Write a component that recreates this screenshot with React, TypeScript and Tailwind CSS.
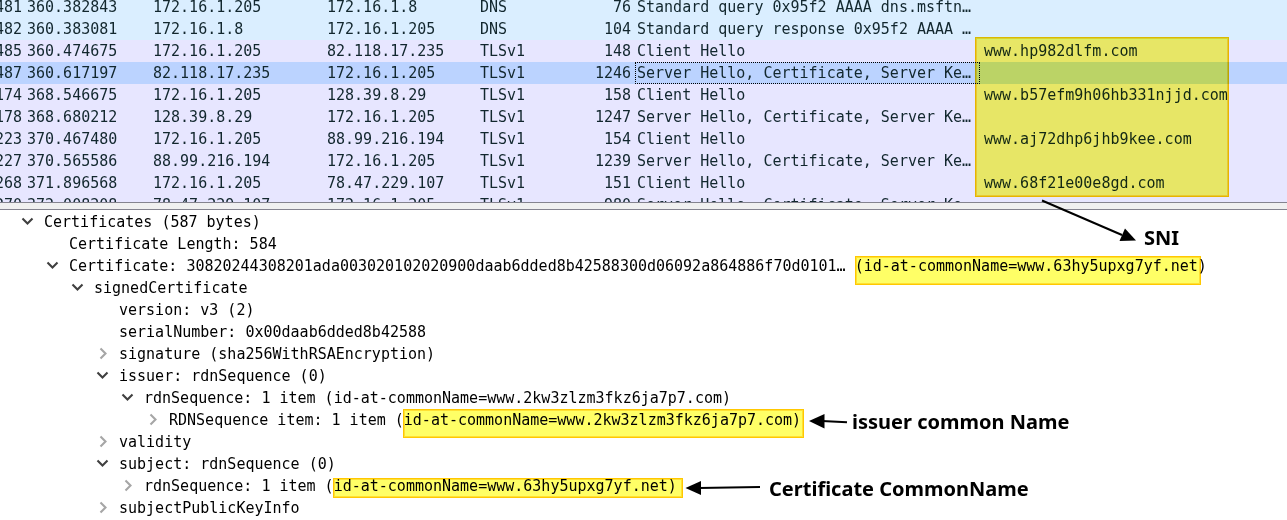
import { useState } from "react";

type Packet = {
  no: string;
  time: string;
  src: string;
  dst: string;
  proto: string;
  len: string;
  info: string;
  sni?: string;
};

const hello = "Server Hello, Certificate, Server Ke…";

const packets: Packet[] = [
  { no: "481", time: "360.382843", src: "172.16.1.205", dst: "172.16.1.8", proto: "DNS", len: "76", info: "Standard query 0x95f2 AAAA dns.msftn…" },
  { no: "482", time: "360.383081", src: "172.16.1.8", dst: "172.16.1.205", proto: "DNS", len: "104", info: "Standard query response 0x95f2 AAAA …" },
  { no: "485", time: "360.474675", src: "172.16.1.205", dst: "82.118.17.235", proto: "TLSv1", len: "148", info: "Client Hello", sni: "www.hp982dlfm.com" },
  { no: "487", time: "360.617197", src: "82.118.17.235", dst: "172.16.1.205", proto: "TLSv1", len: "1246", info: hello },
  { no: "174", time: "368.546675", src: "172.16.1.205", dst: "128.39.8.29", proto: "TLSv1", len: "158", info: "Client Hello", sni: "www.b57efm9h06hb331njjd.com" },
  { no: "178", time: "368.680212", src: "128.39.8.29", dst: "172.16.1.205", proto: "TLSv1", len: "1247", info: hello },
  { no: "223", time: "370.467480", src: "172.16.1.205", dst: "88.99.216.194", proto: "TLSv1", len: "154", info: "Client Hello", sni: "www.aj72dhp6jhb9kee.com" },
  { no: "227", time: "370.565586", src: "88.99.216.194", dst: "172.16.1.205", proto: "TLSv1", len: "1239", info: hello },
  { no: "268", time: "371.896568", src: "172.16.1.205", dst: "78.47.229.107", proto: "TLSv1", len: "151", info: "Client Hello", sni: "www.68f21e00e8gd.com" },
  { no: "270", time: "372.008208", src: "78.47.229.107", dst: "172.16.1.205", proto: "TLSv1", len: "980", info: hello },
];

type Field = { text: string; open?: boolean; leaf?: boolean; children?: Field[] };

const fields: Field[] = [
  {
    text: "Certificates (587 bytes)",
    open: true,
    children: [
      { text: "Certificate Length: 584", leaf: true },
      {
        text: "Certificate: 30820244308201ada003020102020900daab6dded8b42588300d06092a864886f70d0101… (id-at-commonName=www.63hy5upxg7yf.net)",
        open: true,
        children: [
          {
            text: "signedCertificate",
            open: true,
            children: [
              { text: "version: v3 (2)", leaf: true },
              { text: "serialNumber: 0x00daab6dded8b42588", leaf: true },
              { text: "signature (sha256WithRSAEncryption)" },
              {
                text: "issuer: rdnSequence (0)",
                open: true,
                children: [
                  {
                    text: "rdnSequence: 1 item (id-at-commonName=www.2kw3zlzm3fkz6ja7p7.com)",
                    open: true,
                    children: [{ text: "RDNSequence item: 1 item (id-at-commonName=www.2kw3zlzm3fkz6ja7p7.com)" }],
                  },
                ],
              },
              { text: "validity" },
              {
                text: "subject: rdnSequence (0)",
                open: true,
                children: [{ text: "rdnSequence: 1 item (id-at-commonName=www.63hy5upxg7yf.net)" }],
              },
              { text: "subjectPublicKeyInfo" },
            ],
          },
        ],
      },
    ],
  },
];

function Chevron({ open }: { open: boolean }) {
  return (
    <svg viewBox="0 0 16 16" className="h-4 w-4" fill="none" aria-hidden="true">
      {open ? (
        <path d="M3.500 4.500 L8.500 9.500 L13.500 4.500" stroke="#404040" strokeWidth="2.1" />
      ) : (
        <path d="M6.500 2.500 L11.500 7.500 L6.500 12.500" stroke="#a6a6a6" strokeWidth="2.1" />
      )}
    </svg>
  );
}

function TreeNode({ field }: { field: Field }) {
  const [open, setOpen] = useState(!!field.open);
  return (
    <li>
      {field.leaf ? (
        <div className="flex h-[22px] items-center pl-[25px]">{field.text}</div>
      ) : (
        <button type="button" aria-expanded={open} onClick={() => setOpen(!open)} className="flex h-[22px] items-center text-left">
          <span className="w-[25px] shrink-0">
            <Chevron open={open} />
          </span>
          <span>{field.text}</span>
        </button>
      )}
      {open && field.children && (
        <ul className="pl-[25px]">
          {field.children.map((child) => (
            <TreeNode key={child.text} field={child} />
          ))}
        </ul>
      )}
    </li>
  );
}

function rowColor(index: number, proto: string) {
  if (index === 3) return "bg-[#bbd3ff]";
  return proto === "DNS" ? "bg-[#daeeff]" : "bg-[#e7e6ff]";
}

function PacketList() {
  return (
    <div className="h-[202px] overflow-hidden">
      <table className="-mt-1 -ml-2 w-[calc(100%+8px)] table-fixed border-collapse text-[#12272e]">
        <colgroup>
          <col className="w-[32px]" />
          <col className="w-[126px]" />
          <col className="w-[174px]" />
          <col className="w-[153px]" />
          <col className="w-[83px]" />
          <col className="w-[75px]" />
          <col className="w-[345px]" />
          <col />
        </colgroup>
        <tbody>
          {packets.map((p, i) => (
            <tr key={p.no} className={`h-[22px] ${rowColor(i, p.proto)}`}>
              <td className="px-[3px] py-0 text-right">{p.no}</td>
              <td className="px-[3px] py-0">{p.time}</td>
              <td className="px-[3px] py-0">{p.src}</td>
              <td className="px-[3px] py-0">{p.dst}</td>
              <td className="px-[3px] py-0">{p.proto}</td>
              <td className="px-1 py-0 text-right">{p.len}</td>
              <td className={i === 3 ? "px-0.5 py-0 outline-1 -outline-offset-1 outline-dotted outline-black" : "px-0.5 py-0"}>{p.info}</td>
              <td className="px-1 py-0">{p.sni}</td>
            </tr>
          ))}
        </tbody>
      </table>
    </div>
  );
}

const mark = "absolute border border-[#ffc800] bg-[#ffff66] shadow-[inset_0_0_0_1px_#ffe033] mix-blend-multiply";
const label = "absolute font-['Noto_Sans',sans-serif] text-[20px] leading-6 font-bold text-black";

function Annotations() {
  return (
    <>
      <div className={`${mark} top-[37px] left-[975px] h-[160px] w-[254px]`} />
      <div className={`${mark} top-[256px] left-[855px] h-[29px] w-[346px]`} />
      <div className={`${mark} top-[409px] left-[403px] h-[29px] w-[401px]`} />
      <div className={`${mark} top-[478px] left-[333px] h-[20px] w-[350px]`} />
      <svg className="pointer-events-none absolute top-0 left-0 h-[520px] w-[1287px]" stroke="#000" strokeWidth="2" aria-hidden="true">
        <path d="M1042 200.5 L1122 235" />
        <path d="M1136 240.5 L1119.500 241 L1125 228.500 Z" stroke="none" />
        <path d="M822 421 L847 422.200" />
        <path d="M809 421 L824.500 414 L824.500 428.500 Z" stroke="none" />
        <path d="M699 488 L760 487" />
        <path d="M685.500 488 L701 481 L701 495 Z" stroke="none" />
      </svg>
      <span className={`${label} top-[226px] left-[1144px]`}>SNI</span>
      <span className={`${label} top-[410px] left-[852px]`}>issuer common Name</span>
      <span className={`${label} top-[477px] left-[769px]`}>Certificate CommonName</span>
    </>
  );
}

export default function App() {
  return (
    <main className="relative overflow-hidden bg-white font-['DejaVu_Sans_Mono',monospace] text-[15px] leading-[22px] whitespace-nowrap text-black">
      <PacketList />
      <div role="separator" className="h-2 border-y border-[#84838f] bg-[#f0f0f0]" />
      <ul className="pt-px pb-px pl-[19px]">
        {fields.map((f) => (
          <TreeNode key={f.text} field={f} />
        ))}
      </ul>
      <Annotations />
    </main>
  );
}
